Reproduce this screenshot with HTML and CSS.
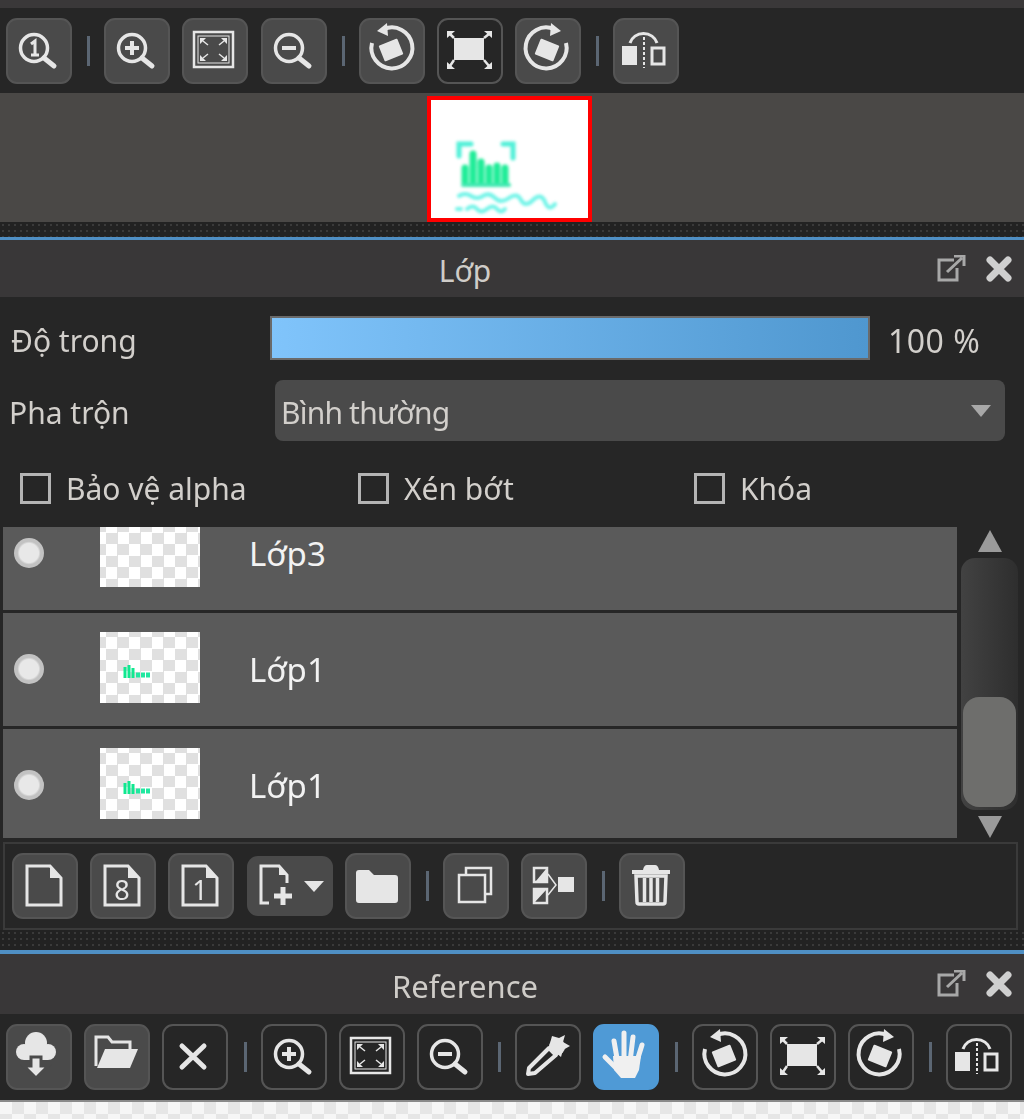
FILE: index.html
```html
<!DOCTYPE html>
<html>
<head>
  <meta charset="UTF-8">
  <title>Lớp</title>
  <link rel="stylesheet" href="styles.css">
</head>
<body>
  <svg class="defs" width="0" height="0">
    <defs>
      <g id="i-mag"><circle cx="28" cy="30" r="13.5" fill="none" stroke="currentColor" stroke-width="3.5"/><path d="M38 40 L48 48" stroke="currentColor" stroke-width="5" stroke-linecap="round"/></g>
      <g id="i-zoom1"><use href="#i-mag"/><path d="M25 26 L29 23 V37 M25 37 H33" fill="none" stroke="currentColor" stroke-width="3"/></g>
      <g id="i-zoomin"><use href="#i-mag"/><path d="M21 30 H35 M28 23 V37" stroke="currentColor" stroke-width="4"/></g>
      <g id="i-zoomout"><use href="#i-mag"/><path d="M21 30 H35" stroke="currentColor" stroke-width="4"/></g>
      <g id="i-fit">
        <rect x="12" y="14" width="39" height="35" fill="none" stroke="currentColor" stroke-width="2.5"/>
        <rect x="16" y="18" width="31" height="27" fill="none" stroke="currentColor" stroke-width="1"/>
        <path d="M18 20 h6 l-6 6z M45 20 h-6 l6 6z M18 43 h6 l-6 -6z M45 43 h-6 l6 -6z" fill="currentColor"/>
        <path d="M21 23 L26 27 M42 23 L37 27 M21 40 L26 36 M42 40 L37 36" stroke="currentColor" stroke-width="1.5"/>
      </g>
      <g id="i-rotl">
        <path d="M25 11 A20.5 20.5 0 1 1 13 25" fill="none" stroke="currentColor" stroke-width="4"/>
        <path d="M18 13 L28 5 L29 18Z" fill="currentColor"/>
        <rect x="-10" y="-8.5" width="20" height="17" rx="1" transform="translate(32 32) rotate(-22)" fill="currentColor"/>
      </g>
      <g id="i-rotr"><use href="#i-rotl" transform="matrix(-1 0 0 1 64 0)"/></g>
      <g id="i-fitbox">
        <rect x="17" y="20" width="30" height="22" fill="currentColor"/>
        <path d="M17 20 L13 16 M47 20 L52 16 M17 42 L13 48 M47 42 L52 48" stroke="currentColor" stroke-width="2.5"/>
        <path d="M10 13 h8 l-8 7z M55 13 h-8 l8 7z M10 51 h8 l-8 -7z M55 51 h-8 l8 -7z" fill="currentColor"/>
      </g>
      <g id="i-flip">
        <rect x="9" y="28" width="15" height="19" fill="currentColor"/>
        <rect x="39" y="30" width="12" height="16" fill="none" stroke="currentColor" stroke-width="3"/>
        <path d="M31 19 V50" stroke="currentColor" stroke-width="2" stroke-dasharray="3 2"/>
        <path d="M17 25 A14 13 0 0 1 44 25" fill="none" stroke="currentColor" stroke-width="3"/>
      </g>
      <g id="i-doc">
        <path d="M15 13 H38 L49 25 V52 H15Z" fill="none" stroke="currentColor" stroke-width="3"/>
        <path d="M38 13 L49 25 H38Z" fill="currentColor"/>
      </g>
      <g id="i-docadd">
        <path d="M20 50 H12 V13 H30 L38 22 V30" fill="none" stroke="currentColor" stroke-width="3"/>
        <path d="M30 13 L38 22 H30Z" fill="currentColor"/>
        <path d="M34 34 V52 M25 43 H43" stroke="currentColor" stroke-width="5"/>
      </g>
      <g id="i-folder"><path d="M11 20 Q11 17 14 17 H24 L29 22 H50 Q53 22 53 25 V47 Q53 50 50 50 H14 Q11 50 11 47Z" fill="currentColor"/></g>
      <g id="i-dup">
        <path d="M23 21 V15 H48 V41 H42" fill="none" stroke="currentColor" stroke-width="2.5"/>
        <rect x="16" y="22" width="26" height="27" fill="none" stroke="currentColor" stroke-width="2.5"/>
      </g>
      <g id="i-merge">
        <rect x="13" y="15" width="13" height="14" fill="none" stroke="currentColor" stroke-width="2.5"/>
        <rect x="13" y="36" width="13" height="14" fill="none" stroke="currentColor" stroke-width="2.5"/>
        <path d="M25 16 L15 28 H25Z M14 37 H25 L14 49Z" fill="currentColor"/>
        <path d="M27 21 L35 32 L27 42" fill="none" stroke="currentColor" stroke-width="1.5"/>
        <rect x="37" y="24" width="16" height="15" fill="currentColor"/>
      </g>
      <g id="i-trash">
        <path d="M13 19 H51" stroke="currentColor" stroke-width="4"/>
        <path d="M24 17 Q25 12 28 12 H36 Q39 12 40 17Z" fill="currentColor"/>
        <path d="M17 23 H47 L46 49 Q46 51 44 51 H20 Q18 51 18 49Z" fill="none" stroke="currentColor" stroke-width="3.5"/>
        <path d="M25.5 25 V49 M32 25 V49 M38.5 25 V49" stroke="currentColor" stroke-width="3.5"/>
      </g>
      <g id="i-cloud">
        <circle cx="30" cy="19" r="11" fill="currentColor"/>
        <circle cx="18" cy="28" r="8" fill="currentColor"/>
        <circle cx="42" cy="28" r="8" fill="currentColor"/>
        <rect x="18" y="22" width="24" height="14" fill="currentColor"/>
        <path d="M25 33 H35 V42 H42 L30 54 L18 42 H25Z" fill="currentColor" stroke="#4a4a4a" stroke-width="3"/>
      </g>
      <g id="i-open">
        <path d="M12 42 V13 H24 L28 18 H46 V25" fill="none" stroke="currentColor" stroke-width="3"/>
        <path d="M13 44 L21 25 H54 L46 44Z" fill="currentColor"/>
      </g>
      <g id="i-x"><path d="M20 22 L42 43 M42 22 L20 43" stroke="currentColor" stroke-width="5" stroke-linecap="round"/></g>
      <g id="i-pipette">
        <path d="M13 50 L14 44 L34 24 L41 31 L20 49Z" fill="none" stroke="currentColor" stroke-width="4" stroke-linejoin="round"/>
        <circle cx="42" cy="23" r="8" fill="currentColor"/>
        <path d="M37 12 L44 14 L50 11 L48 18 L55 22 L48 26 L46 33 L34 23Z" fill="currentColor"/>
      </g>
      <g id="i-hand">
        <path d="M23 44 L12 33 M25 40 L21 17 M31 38 L31 9 M37 38 L40 13 M43 40 L49 21" stroke="currentColor" stroke-width="5" stroke-linecap="round"/>
        <path d="M20 32 H48 L46 46 L42 54 H28 L21 46Z" fill="currentColor"/>
      </g>
      <g id="i-ext">
        <path d="M18 5 H3 V25 H21 V13" fill="none" stroke="currentColor" stroke-width="3"/>
        <path d="M11 17 L26 3 M18 1 H28 V11" fill="none" stroke="currentColor" stroke-width="3"/>
      </g>
      <g id="i-close"><path d="M4 4 L22 22 M22 4 L4 22" stroke="currentColor" stroke-width="7" stroke-linecap="round"/></g>
    </defs>
  </svg>

  <div class="app">
    <div class="strip-top"></div>

    <div class="toolbar">
      <div class="btn"><svg viewBox="0 0 66 66"><use href="#i-zoom1"/></svg></div>
      <div class="sep"></div>
      <div class="btn"><svg viewBox="0 0 66 66"><use href="#i-zoomin"/></svg></div>
      <div class="btn"><svg viewBox="0 0 66 66"><use href="#i-fit"/></svg></div>
      <div class="btn"><svg viewBox="0 0 66 66"><use href="#i-zoomout"/></svg></div>
      <div class="sep"></div>
      <div class="btn"><svg viewBox="0 0 66 66"><use href="#i-rotl"/></svg></div>
      <div class="btn btn-line"><svg viewBox="0 0 66 66"><use href="#i-fitbox"/></svg></div>
      <div class="btn"><svg viewBox="0 0 66 66"><use href="#i-rotr"/></svg></div>
      <div class="sep"></div>
      <div class="btn"><svg viewBox="0 0 66 66"><use href="#i-flip"/></svg></div>
    </div>

    <div class="preview">
      <div class="preview-page">
        <svg viewBox="0 0 157 118">
          <g fill="none" stroke-linecap="round">
            <path d="M28 56 V44 H40 M72 44 H82 V58" stroke="#50f0d8" stroke-width="5"/>
            <path d="M34 82 V68 M42 82 V54 M50 82 V62 M58 82 V68 M66 82 V66 M74 82 V68" stroke="#20ec98" stroke-width="7"/>
            <path d="M32 85 H78" stroke="#40e8b0" stroke-width="4"/>
            <path d="M28 96 q6 -4 12 0 t12 0 t12 2 t14 0 t12 2 t12 0 t12 2 t10 2" stroke="#70f4e8" stroke-width="4"/>
            <path d="M26 109 h4 M36 109 q6 -5 10 0 t10 0 t10 0 t8 0" stroke="#70f4e8" stroke-width="4"/>
          </g>
        </svg>
      </div>
    </div>

    <div class="dots dots-a"></div>
    <div class="blue-line blue-a"></div>

    <div class="title-bar title-a">
      <div class="title-text">Lớp</div>
      <div class="title-icons">
        <svg class="ico-ext" viewBox="0 0 30 28"><use href="#i-ext"/></svg>
        <svg class="ico-close" viewBox="0 0 26 26"><use href="#i-close"/></svg>
      </div>
    </div>

    <div class="layer-panel">
      <div class="row-opacity">
        <div class="lbl lbl-opacity">Độ trong</div>
        <div class="slider"></div>
        <div class="lbl val">100 %</div>
      </div>

      <div class="row-blend">
        <div class="lbl lbl-blend">Pha trộn</div>
        <div class="combo">
          <span class="combo-text">Bình thường</span>
          <i class="combo-arrow"></i>
        </div>
      </div>

      <div class="row-checks">
        <div class="check"><i class="box"></i><span>Bảo vệ alpha</span></div>
        <div class="check"><i class="box"></i><span>Xén bớt</span></div>
        <div class="check"><i class="box"></i><span>Khóa</span></div>
      </div>

      <div class="list-wrap">
        <div class="layer-list">
          <div class="layers">
            <div class="layer">
              <i class="eye"></i>
              <div class="thumb"></div>
              <div class="layer-name">Lớp3</div>
            </div>
            <div class="layer">
              <i class="eye"></i>
              <div class="thumb"><svg viewBox="0 0 100 71"><path d="M25 46 V35 M29 46 V33 M33 46 V36" stroke="#10e890" stroke-width="3"/><path d="M36 43 H50" stroke="#20e8a0" stroke-width="5" stroke-dasharray="4 1"/></svg></div>
              <div class="layer-name">Lớp1</div>
            </div>
            <div class="layer">
              <i class="eye"></i>
              <div class="thumb"><svg viewBox="0 0 100 71"><path d="M25 46 V35 M29 46 V33 M33 46 V36" stroke="#10e890" stroke-width="3"/><path d="M36 43 H50" stroke="#20e8a0" stroke-width="5" stroke-dasharray="4 1"/></svg></div>
              <div class="layer-name">Lớp1</div>
            </div>
          </div>
        </div>
        <div class="scroll">
          <i class="arr-up"></i>
          <div class="scroll-track"><div class="scroll-thumb"></div></div>
          <i class="arr-down"></i>
        </div>
      </div>

      <div class="layer-tools">
        <div class="btn"><svg viewBox="0 0 66 66"><use href="#i-doc"/></svg></div>
        <div class="btn"><svg viewBox="0 0 66 66"><use href="#i-doc"/><text x="32" y="47" class="doc-num">8</text></svg></div>
        <div class="btn"><svg viewBox="0 0 66 66"><use href="#i-doc"/><text x="32" y="47" class="doc-num">1</text></svg></div>
        <div class="btn btn-drop"><svg viewBox="0 0 50 66"><use href="#i-docadd"/></svg><i class="drop-arrow"></i></div>
        <div class="btn"><svg viewBox="0 0 66 66"><use href="#i-folder"/></svg></div>
        <div class="sep"></div>
        <div class="btn"><svg viewBox="0 0 66 66"><use href="#i-dup"/></svg></div>
        <div class="btn"><svg viewBox="0 0 66 66"><use href="#i-merge"/></svg></div>
        <div class="sep"></div>
        <div class="btn"><svg viewBox="0 0 66 66"><use href="#i-trash"/></svg></div>
      </div>
    </div>

    <div class="dots dots-b"></div>
    <div class="blue-line blue-b"></div>

    <div class="title-bar title-b">
      <div class="title-text">Reference</div>
      <div class="title-icons">
        <svg class="ico-ext" viewBox="0 0 30 28"><use href="#i-ext"/></svg>
        <svg class="ico-close" viewBox="0 0 26 26"><use href="#i-close"/></svg>
      </div>
    </div>

    <div class="toolbar toolbar-ref">
      <div class="btn"><svg viewBox="0 0 66 66"><use href="#i-cloud"/></svg></div>
      <div class="btn"><svg viewBox="0 0 66 66"><use href="#i-open"/></svg></div>
      <div class="btn btn-line"><svg viewBox="0 0 66 66"><use href="#i-x"/></svg></div>
      <div class="sep"></div>
      <div class="btn btn-line"><svg viewBox="0 0 66 66"><use href="#i-zoomin"/></svg></div>
      <div class="btn btn-line"><svg viewBox="0 0 66 66"><use href="#i-fit"/></svg></div>
      <div class="btn btn-line"><svg viewBox="0 0 66 66"><use href="#i-zoomout"/></svg></div>
      <div class="sep"></div>
      <div class="btn btn-line"><svg viewBox="0 0 66 66"><use href="#i-pipette"/></svg></div>
      <div class="btn btn-on"><svg viewBox="0 0 66 66"><use href="#i-hand"/></svg></div>
      <div class="sep"></div>
      <div class="btn btn-line"><svg viewBox="0 0 66 66"><use href="#i-rotl"/></svg></div>
      <div class="btn btn-line"><svg viewBox="0 0 66 66"><use href="#i-fitbox"/></svg></div>
      <div class="btn btn-line"><svg viewBox="0 0 66 66"><use href="#i-rotr"/></svg></div>
      <div class="sep"></div>
      <div class="btn btn-line"><svg viewBox="0 0 66 66"><use href="#i-flip"/></svg></div>
    </div>

    <div class="checker-strip"></div>
  </div>
</body>
</html>
```

FILE: styles.css
```css
* {
  box-sizing: border-box;
}

html, body {
  margin: 0;
  height: 1119px;
  overflow: hidden;
  background: #262626;
}

body {
  font-family: "Noto Sans", Arial, sans-serif;
  font-size: 30px;
  color: #d2cfcb;
}

i {
  display: block;
}

.defs {
  position: absolute;
}

.app {
  height: 1119px;
  filter: blur(0.7px);
}

.strip-top {
  height: 8px;
  background: #3a3839;
}

/* toolbars */
.toolbar {
  height: 85px;
  padding: 10px 0 0 6px;
  display: flex;
  align-items: flex-start;
  background: #262626;
}

.toolbar-ref {
  height: 86px;
}

.btn {
  width: 66px;
  height: 66px;
  flex: none;
  margin-right: 12.2px;
  border: 2px solid #555;
  border-radius: 11px;
  background: #4a4a4a;
  color: #e6e6e6;
}

.btn svg {
  display: block;
  width: 66px;
  height: 66px;
  margin: -2px;
}

.btn-line {
  background: #262626;
}

.btn-on {
  background: #4f9ad6;
  border-color: #4f9ad6;
  color: #f0f0f0;
}

.btn-drop {
  width: 86px;
  height: 60px;
  margin-top: 3px;
  border: 0;
  display: flex;
  align-items: center;
}

.btn-drop svg {
  width: 50px;
  margin: 0 0 0 2px;
}

.drop-arrow {
  margin-left: 5px;
  border: 10px solid transparent;
  border-top: 11px solid #e6e6e6;
  border-bottom: 0;
}

.sep {
  width: 3px;
  height: 30px;
  flex: none;
  margin: 18px 14px 0 3px;
  background: #5b6673;
}

.doc-num {
  font-size: 27px;
  text-anchor: middle;
  fill: currentColor;
}

/* preview */
.preview {
  height: 129px;
  padding: 3px 5px 0 0;
  display: flex;
  justify-content: center;
  background: #4a4846;
}

.preview-page {
  width: 165px;
  height: 126px;
  border: 4px solid #f00;
  background: #fff;
}

.preview-page svg {
  display: block;
  width: 157px;
  height: 118px;
  filter: blur(1.6px);
}

/* grab strips between docks */
.dots {
  background-color: #222;
  background-image: radial-gradient(#3a3a3a 1px, transparent 1.5px);
  background-size: 6px 6px;
}

.dots-a {
  height: 15px;
}

.dots-b {
  height: 20px;
}

.blue-line {
  background: #4f8fc4;
}

.blue-a {
  height: 3px;
}

.blue-b {
  height: 4px;
}

.title-bar {
  display: flex;
  align-items: center;
  background: #393738;
}

.title-a {
  height: 57px;
}

.title-b {
  height: 60px;
}

.title-text {
  flex: 1;
  padding-top: 5px;
  text-align: center;
  line-height: 1;
  color: #cfccc8;
}

.title-b .title-text {
  font-size: 31px;
}

.title-icons {
  width: 94px;
  padding: 0 12px 0 6px;
  display: flex;
  justify-content: space-between;
  align-items: center;
}

.ico-ext {
  width: 30px;
  height: 28px;
  color: #a8a8a8;
}

.ico-close {
  width: 26px;
  height: 26px;
  color: #cfcfcf;
}

/* layer panel */
.layer-panel {
  padding-top: 19px;
}

.lbl {
  line-height: 1;
  padding-top: 5px;
}

.row-opacity {
  height: 44px;
  display: flex;
  align-items: center;
}

.lbl-opacity {
  width: 270px;
  padding-left: 11px;
  flex: none;
}

.slider {
  width: 600px;
  height: 44px;
  border: 2px solid #6a6a6a;
  background: linear-gradient(to right, #80c4fb, #4f97cf);
}

.val {
  margin-left: 18px;
  font-size: 32px;
  letter-spacing: 0.5px;
}

.row-blend {
  height: 61px;
  margin-top: 20px;
  display: flex;
  align-items: center;
}

.lbl-blend {
  width: 275px;
  padding-left: 9px;
  flex: none;
}

.combo {
  width: 730px;
  height: 61px;
  padding: 0 14px 0 6px;
  display: flex;
  align-items: center;
  justify-content: space-between;
  background: #4a4a4a;
  border-radius: 8px;
}

.combo-text {
  padding-top: 4px;
  letter-spacing: -0.8px;
}

.combo-arrow {
  border: 10px solid transparent;
  border-top: 12px solid #a8a8a8;
  border-bottom: 0;
}

.row-checks {
  height: 31px;
  margin-top: 32px;
  padding-left: 20px;
  display: grid;
  grid-template-columns: 338px 336px 1fr;
}

.check {
  display: flex;
  align-items: center;
  line-height: 1;
}

.box {
  width: 31px;
  height: 31px;
  margin-right: 15px;
  border: 3px solid #b4b4b4;
}

.list-wrap {
  height: 311px;
  margin-top: 23px;
  display: flex;
}

.layer-list {
  width: 954px;
  margin-left: 3px;
  overflow: hidden;
}

.layers {
  margin-top: -30px;
}

.layer {
  height: 113px;
  margin-bottom: 3px;
  padding-left: 11px;
  display: flex;
  align-items: center;
  background: #5a5a5a;
}

.eye {
  width: 30px;
  height: 30px;
  margin-top: -2px;
  border-radius: 50%;
  background: radial-gradient(circle, #e8e8e8 0 45%, #c2c2c2 55%);
}

.thumb {
  width: 100px;
  height: 71px;
  margin: -4px 49px 0 56px;
  background-color: #fff;
  background-image: conic-gradient(#e0e0e0 25%, #fff 0 50%, #e0e0e0 0 75%, #fff 0);
  background-size: 23px 23px;
  background-position: 6px 5px;
}

.thumb svg {
  display: block;
  width: 100px;
  height: 71px;
}

.layer-name {
  font-size: 33px;
  line-height: 1;
  color: #f2f2f2;
}

.scroll {
  width: 57px;
  margin-left: 4px;
  padding-top: 3px;
  display: flex;
  flex-direction: column;
  align-items: center;
}

.arr-up {
  border: 12px solid transparent;
  border-bottom: 22px solid #9a9a9a;
  border-top: 0;
}

.arr-down {
  margin-top: 6px;
  border: 12px solid transparent;
  border-top: 22px solid #9a9a9a;
  border-bottom: 0;
}

.scroll-track {
  width: 57px;
  height: 252px;
  margin-top: 6px;
  padding: 0 2px 3px;
  display: flex;
  align-items: flex-end;
  border-radius: 14px;
  background: linear-gradient(to right, #424242, #2e2e2e);
}

.scroll-thumb {
  width: 53px;
  height: 110px;
  border-radius: 16px;
  background: #6e6e6c;
}

.layer-tools {
  height: 88px;
  width: 1015px;
  margin: 4px 0 0 3px;
  padding: 9px 0 0 7px;
  display: flex;
  align-items: flex-start;
  border: 2px solid #3a3a3a;
}

.checker-strip {
  height: 19px;
  border-top: 2px solid #8a8a8a;
  background-color: #f6f6f6;
  background-image: conic-gradient(#e6e6e6 25%, #f6f6f6 0 50%, #e6e6e6 0 75%, #f6f6f6 0);
  background-size: 24px 24px;
}
```
